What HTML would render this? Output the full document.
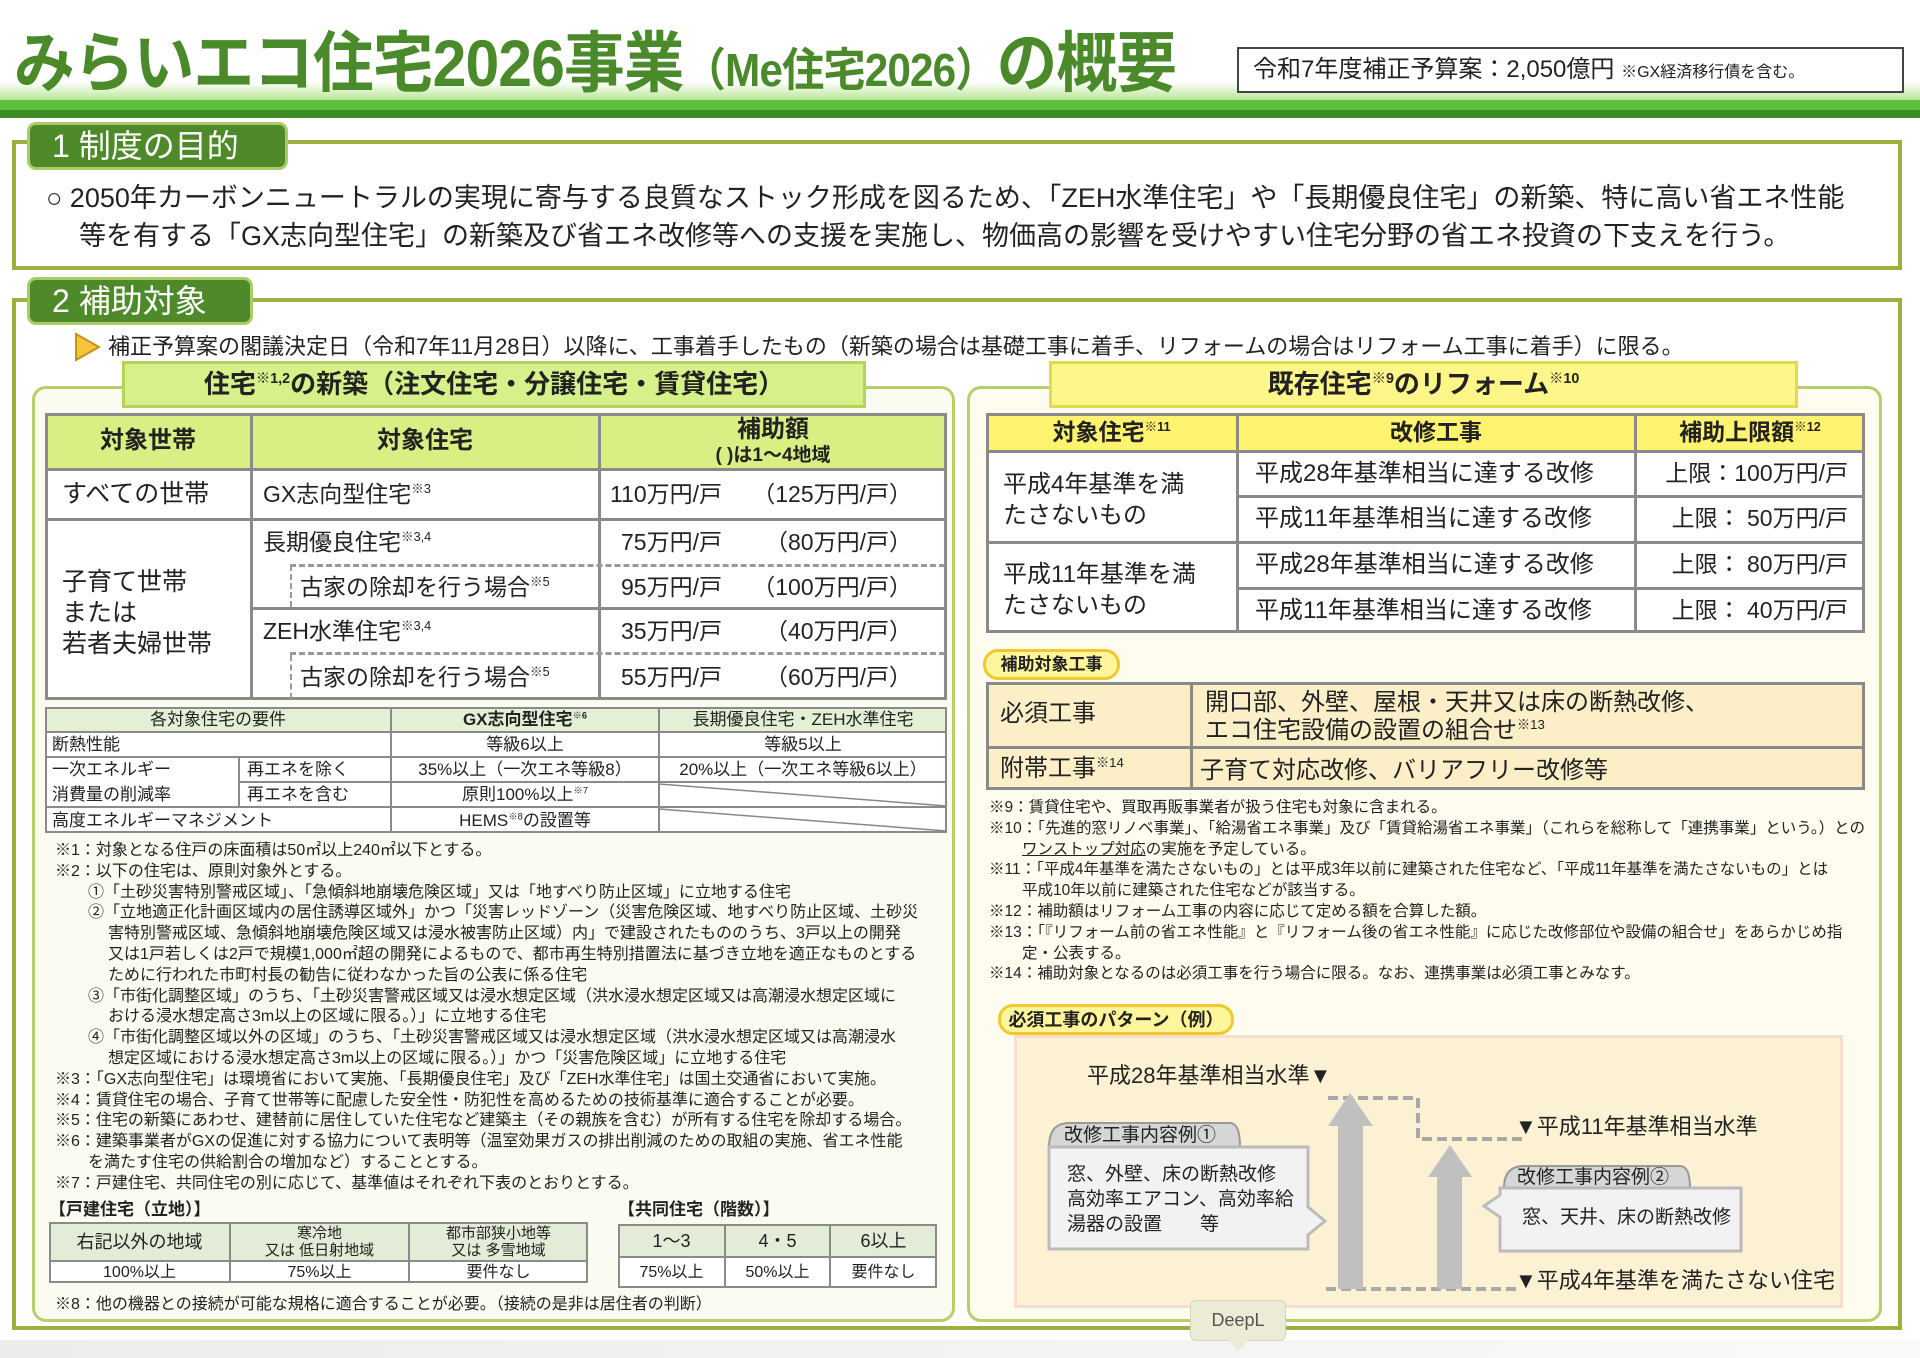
<!DOCTYPE html>
<html><head><meta charset="utf-8">
<style>
*{margin:0;padding:0;box-sizing:border-box}
body{width:1920px;height:1358px;position:relative;background:#fff;font-family:"Liberation Sans","Noto Sans CJK JP",sans-serif;color:#222;overflow:hidden}
.a{position:absolute}
.t{position:absolute;white-space:nowrap;line-height:1}
.c{text-align:center}
sup{font-size:0.55em;vertical-align:0.7em;line-height:0}
.hl{position:absolute;height:3px;background:#8a8a8a}
.vl{position:absolute;width:3px;background:#8a8a8a}
.dh{position:absolute;height:0;border-top:3px dashed #999}
.dv{position:absolute;width:0;border-left:2px dashed #999}
.n{position:absolute;white-space:nowrap;line-height:1;font-size:16px}
.r{position:absolute;white-space:nowrap;line-height:1;font-size:15.5px}
</style></head><body>

<!-- header band -->
<div class="a" style="left:0;top:82px;width:1920px;height:18px;background:linear-gradient(#ffffff,#d6f0c0 60%,#b8e49a)"></div>
<div class="a" style="left:0;top:100px;width:1920px;height:10px;background:#5cc03c"></div>
<div class="a" style="left:0;top:110px;width:1920px;height:8px;background:#3e8e28"></div>

<div class="t" style="left:14px;top:30px;font-size:66px;font-weight:bold;color:#4a8a2a;transform:scaleX(0.92);transform-origin:left;letter-spacing:-1px">みらいエコ住宅2026事業<span style="font-size:46px">（Me住宅2026）</span>の概要</div>

<div class="a" style="left:1237px;top:47px;width:667px;height:46px;border:2px solid #444;background:#fff"></div>
<div class="t" style="left:1253px;top:58px;font-size:24px">令和7年度補正予算案：2,050億円 <span style="font-size:16px">※GX経済移行債を含む。</span></div>

<!-- Section 1 -->
<div class="a" style="left:12px;top:140px;width:1890px;height:130px;border:4px solid #9bb040;background:#fff"></div>
<div class="a" style="left:27px;top:122px;width:261px;height:48px;border:3px solid #a9cc66;border-radius:9px;background:#4e8a2a"></div>
<div class="t" style="left:52px;top:130px;font-size:32px;color:#fff">1 制度の目的</div>
<div class="t" style="left:46px;top:185px;font-size:27px">○ 2050年カーボンニュートラルの実現に寄与する良質なストック形成を図るため、「ZEH水準住宅」や「長期優良住宅」の新築、特に高い省エネ性能</div>
<div class="t" style="left:79px;top:223px;font-size:27px">等を有する「GX志向型住宅」の新築及び省エネ改修等への支援を実施し、物価高の影響を受けやすい住宅分野の省エネ投資の下支えを行う。</div>

<!-- Section 2 -->
<div class="a" style="left:12px;top:298px;width:1890px;height:1032px;border:4px solid #9bb040;background:#fff"></div>
<div class="a" style="left:27px;top:277px;width:226px;height:48px;border:3px solid #a9cc66;border-radius:9px;background:#4e8a2a"></div>
<div class="t" style="left:52px;top:285px;font-size:32px;color:#fff">2 補助対象</div>
<svg class="a" style="left:74px;top:332px" width="28" height="30"><polygon points="2,2 25,15 2,28" fill="#f6c33c" stroke="#c8901e" stroke-width="2"/></svg>
<div class="t" style="left:108px;top:336px;font-size:22px">補正予算案の閣議決定日（令和7年11月28日）以降に、工事着手したもの（新築の場合は基礎工事に着手、リフォームの場合はリフォーム工事に着手）に限る。</div>

<!-- Left panel -->
<div class="a" style="left:32px;top:386px;width:923px;height:936px;border:3px solid #b7cf6a;border-radius:14px;background:#fbfcf1"></div>
<div class="a" style="left:122px;top:361px;width:744px;height:47px;background:#d6f08a;border:3px solid #b3d35a"></div>
<div class="t c" style="left:122px;top:371px;width:744px;font-size:26px;font-weight:bold">住宅<sup>※1,2</sup>の新築（注文住宅・分譲住宅・賃貸住宅）</div>

<!-- main table -->
<div class="a" style="left:45px;top:413px;width:902px;height:287px;background:#fff;border:3px solid #8a8a8a"></div>
<div class="a" style="left:48px;top:416px;width:896px;height:53px;background:#d9ef83"></div>
<div class="vl" style="left:250px;top:413px;height:287px"></div>
<div class="vl" style="left:598px;top:413px;height:287px"></div>
<div class="hl" style="left:45px;top:468px;width:902px"></div>
<div class="hl" style="left:45px;top:518px;width:902px"></div>
<div class="hl" style="left:251px;top:607px;width:696px"></div>
<div class="dh" style="left:290px;top:564px;width:655px"></div>
<div class="dh" style="left:290px;top:652px;width:655px"></div>
<div class="dv" style="left:290px;top:565px;height:42px"></div>
<div class="dv" style="left:290px;top:655px;height:44px"></div>
<div class="t c" style="left:45px;top:429px;width:206px;font-size:24px;font-weight:bold">対象世帯</div>
<div class="t c" style="left:251px;top:429px;width:348px;font-size:24px;font-weight:bold">対象住宅</div>
<div class="t c" style="left:599px;top:418px;width:348px;font-size:24px;font-weight:bold">補助額</div>
<div class="t c" style="left:599px;top:446px;width:348px;font-size:19px;font-weight:bold">( )は1～4地域</div>
<div class="t" style="left:62px;top:482px;font-size:25px">すべての世帯</div>
<div class="t" style="left:62px;top:567px;font-size:25px;line-height:31px">子育て世帯<br>または<br>若者夫婦世帯</div>
<div class="t" style="left:263px;top:483px;font-size:23px">GX志向型住宅<sup>※3</sup></div>
<div class="t" style="left:263px;top:531px;font-size:23px">長期優良住宅<sup>※3,4</sup></div>
<div class="t" style="left:300px;top:576px;font-size:23px">古家の除却を行う場合<sup>※5</sup></div>
<div class="t" style="left:263px;top:620px;font-size:23px">ZEH水準住宅<sup>※3,4</sup></div>
<div class="t" style="left:300px;top:666px;font-size:23px">古家の除却を行う場合<sup>※5</sup></div>
<div class="t" style="right:1198px;top:483px;font-size:23px">110万円/戸</div><div class="t" style="right:1008px;top:483px;font-size:23px">（125万円/戸）</div>
<div class="t" style="right:1198px;top:531px;font-size:23px">75万円/戸</div><div class="t" style="right:1008px;top:531px;font-size:23px">（80万円/戸）</div>
<div class="t" style="right:1198px;top:576px;font-size:23px">95万円/戸</div><div class="t" style="right:1008px;top:576px;font-size:23px">（100万円/戸）</div>
<div class="t" style="right:1198px;top:620px;font-size:23px">35万円/戸</div><div class="t" style="right:1008px;top:620px;font-size:23px">（40万円/戸）</div>
<div class="t" style="right:1198px;top:666px;font-size:23px">55万円/戸</div><div class="t" style="right:1008px;top:666px;font-size:23px">（60万円/戸）</div>

<!-- requirement table -->
<div class="a" style="left:45px;top:707px;width:902px;height:126px;background:#fff;border:2px solid #8a8a8a"></div>
<div class="a" style="left:47px;top:709px;width:898px;height:23px;background:#e4efd6"></div>
<div class="a" style="left:45px;top:731px;width:902px;height:2px;background:#8a8a8a"></div>
<div class="a" style="left:45px;top:756px;width:902px;height:2px;background:#8a8a8a"></div>
<div class="a" style="left:239px;top:781px;width:708px;height:2px;background:#8a8a8a"></div>
<div class="a" style="left:45px;top:806px;width:902px;height:2px;background:#8a8a8a"></div>
<div class="a" style="left:390px;top:707px;width:2px;height:126px;background:#8a8a8a"></div>
<div class="a" style="left:658px;top:707px;width:2px;height:126px;background:#8a8a8a"></div>
<div class="a" style="left:238px;top:757px;width:2px;height:50px;background:#8a8a8a"></div>
<svg class="a" style="left:659px;top:782px" width="288" height="51"><line x1="0" y1="2" x2="288" y2="24" stroke="#888" stroke-width="1.5"/><line x1="0" y1="27" x2="288" y2="49" stroke="#888" stroke-width="1.5"/></svg>
<div class="t c" style="left:45px;top:711px;width:346px;font-size:17px">各対象住宅の要件</div>
<div class="t c" style="left:391px;top:711px;width:268px;font-size:17px;font-weight:bold">GX志向型住宅<sup>※6</sup></div>
<div class="t c" style="left:659px;top:711px;width:288px;font-size:17px">長期優良住宅・ZEH水準住宅</div>
<div class="t" style="left:52px;top:736px;font-size:17px">断熱性能</div>
<div class="t c" style="left:391px;top:736px;width:268px;font-size:17px">等級6以上</div>
<div class="t c" style="left:659px;top:736px;width:288px;font-size:17px">等級5以上</div>
<div class="t" style="left:52px;top:761px;font-size:17px">一次エネルギー</div>
<div class="t" style="left:52px;top:786px;font-size:17px">消費量の削減率</div>
<div class="t" style="left:247px;top:761px;font-size:17px">再エネを除く</div>
<div class="t" style="left:247px;top:786px;font-size:17px">再エネを含む</div>
<div class="t c" style="left:391px;top:761px;width:268px;font-size:17px">35%以上（一次エネ等級8）</div>
<div class="t c" style="left:659px;top:761px;width:288px;font-size:17px">20%以上（一次エネ等級6以上）</div>
<div class="t c" style="left:391px;top:786px;width:268px;font-size:17px">原則100%以上<sup>※7</sup></div>
<div class="t" style="left:52px;top:812px;font-size:17px">高度エネルギーマネジメント</div>
<div class="t c" style="left:391px;top:812px;width:268px;font-size:17px">HEMS<sup>※8</sup>の設置等</div>

<!-- left notes -->
<div class="n" style="left:55px;top:843px">※1：対象となる住戸の床面積は50㎡以上240㎡以下とする。</div>
<div class="n" style="left:55px;top:864px">※2：以下の住宅は、原則対象外とする。</div>
<div class="n" style="left:88px;top:885px">①「土砂災害特別警戒区域」、「急傾斜地崩壊危険区域」又は「地すべり防止区域」に立地する住宅</div>
<div class="n" style="left:88px;top:905px">②「立地適正化計画区域内の居住誘導区域外」かつ「災害レッドゾーン（災害危険区域、地すべり防止区域、土砂災</div>
<div class="n" style="left:108px;top:926px">害特別警戒区域、急傾斜地崩壊危険区域又は浸水被害防止区域）内」で建設されたもののうち、3戸以上の開発</div>
<div class="n" style="left:108px;top:947px">又は1戸若しくは2戸で規模1,000㎡超の開発によるもので、都市再生特別措置法に基づき立地を適正なものとする</div>
<div class="n" style="left:108px;top:968px">ために行われた市町村長の勧告に従わなかった旨の公表に係る住宅</div>
<div class="n" style="left:88px;top:989px">③「市街化調整区域」のうち、「土砂災害警戒区域又は浸水想定区域（洪水浸水想定区域又は高潮浸水想定区域に</div>
<div class="n" style="left:108px;top:1009px">おける浸水想定高さ3m以上の区域に限る。）」に立地する住宅</div>
<div class="n" style="left:88px;top:1030px">④「市街化調整区域以外の区域」のうち、「土砂災害警戒区域又は浸水想定区域（洪水浸水想定区域又は高潮浸水</div>
<div class="n" style="left:108px;top:1051px">想定区域における浸水想定高さ3m以上の区域に限る。）」かつ「災害危険区域」に立地する住宅</div>
<div class="n" style="left:55px;top:1072px">※3：「GX志向型住宅」は環境省において実施、「長期優良住宅」及び「ZEH水準住宅」は国土交通省において実施。</div>
<div class="n" style="left:55px;top:1093px">※4：賃貸住宅の場合、子育て世帯等に配慮した安全性・防犯性を高めるための技術基準に適合することが必要。</div>
<div class="n" style="left:55px;top:1113px">※5：住宅の新築にあわせ、建替前に居住していた住宅など建築主（その親族を含む）が所有する住宅を除却する場合。</div>
<div class="n" style="left:55px;top:1134px">※6：建築事業者がGXの促進に対する協力について表明等（温室効果ガスの排出削減のための取組の実施、省エネ性能</div>
<div class="n" style="left:88px;top:1155px">を満たす住宅の供給割合の増加など）することとする。</div>
<div class="n" style="left:55px;top:1176px">※7：戸建住宅、共同住宅の別に応じて、基準値はそれぞれ下表のとおりとする。</div>

<!-- small tables -->
<div class="t" style="left:49px;top:1201px;font-size:17px;font-weight:bold">【戸建住宅（立地）】</div>
<div class="a" style="left:49px;top:1222px;width:539px;height:61px;background:#fff;border:2px solid #8a8a8a"></div>
<div class="a" style="left:51px;top:1224px;width:535px;height:37px;background:#e3ecd6"></div>
<div class="a" style="left:49px;top:1260px;width:539px;height:2px;background:#8a8a8a"></div>
<div class="a" style="left:229px;top:1222px;width:2px;height:61px;background:#8a8a8a"></div>
<div class="a" style="left:408px;top:1222px;width:2px;height:61px;background:#8a8a8a"></div>
<div class="t c" style="left:49px;top:1233px;width:181px;font-size:18px">右記以外の地域</div>
<div class="t c" style="left:230px;top:1225px;width:179px;font-size:15px;line-height:17px">寒冷地<br>又は 低日射地域</div>
<div class="t c" style="left:409px;top:1225px;width:179px;font-size:15px;line-height:17px">都市部狭小地等<br>又は 多雪地域</div>
<div class="t c" style="left:49px;top:1265px;width:181px;font-size:16px">100%以上</div>
<div class="t c" style="left:230px;top:1265px;width:179px;font-size:16px">75%以上</div>
<div class="t c" style="left:409px;top:1265px;width:179px;font-size:16px">要件なし</div>

<div class="t" style="left:618px;top:1201px;font-size:17px;font-weight:bold">【共同住宅（階数）】</div>
<div class="a" style="left:618px;top:1224px;width:319px;height:64px;background:#fff;border:2px solid #8a8a8a"></div>
<div class="a" style="left:620px;top:1226px;width:315px;height:31px;background:#e3ecd6"></div>
<div class="a" style="left:618px;top:1256px;width:319px;height:2px;background:#8a8a8a"></div>
<div class="a" style="left:724px;top:1224px;width:2px;height:64px;background:#8a8a8a"></div>
<div class="a" style="left:829px;top:1224px;width:2px;height:64px;background:#8a8a8a"></div>
<div class="t c" style="left:618px;top:1232px;width:107px;font-size:18px">1～3</div>
<div class="t c" style="left:725px;top:1232px;width:105px;font-size:18px">4・5</div>
<div class="t c" style="left:830px;top:1232px;width:107px;font-size:18px">6以上</div>
<div class="t c" style="left:618px;top:1265px;width:107px;font-size:16px">75%以上</div>
<div class="t c" style="left:725px;top:1265px;width:105px;font-size:16px">50%以上</div>
<div class="t c" style="left:830px;top:1265px;width:107px;font-size:16px">要件なし</div>
<div class="n" style="left:55px;top:1297px">※8：他の機器との接続が可能な規格に適合することが必要。（接続の是非は居住者の判断）</div>

<!-- Right panel -->
<div class="a" style="left:967px;top:386px;width:915px;height:936px;border:3px solid #b7cf6a;border-radius:14px;background:#fdfcee"></div>
<div class="a" style="left:1049px;top:361px;width:749px;height:47px;background:#fff68a;border:3px solid #dedc4e"></div>
<div class="t c" style="left:1049px;top:371px;width:749px;font-size:26px;font-weight:bold">既存住宅<sup>※9</sup>のリフォーム<sup>※10</sup></div>

<div class="a" style="left:986px;top:413px;width:879px;height:220px;background:#fff;border:3px solid #8a8a8a"></div>
<div class="a" style="left:989px;top:416px;width:873px;height:35px;background:#fff370"></div>
<div class="vl" style="left:1236px;top:413px;height:220px"></div>
<div class="vl" style="left:1634px;top:413px;height:220px"></div>
<div class="hl" style="left:986px;top:450px;width:879px"></div>
<div class="hl" style="left:1237px;top:495px;width:628px"></div>
<div class="hl" style="left:986px;top:541px;width:879px"></div>
<div class="hl" style="left:1237px;top:587px;width:628px"></div>
<div class="t c" style="left:986px;top:421px;width:251px;font-size:23px;font-weight:bold">対象住宅<sup>※11</sup></div>
<div class="t c" style="left:1237px;top:421px;width:398px;font-size:23px;font-weight:bold">改修工事</div>
<div class="t c" style="left:1635px;top:421px;width:230px;font-size:23px;font-weight:bold">補助上限額<sup>※12</sup></div>
<div class="t" style="left:1003px;top:469px;font-size:24px;line-height:31px">平成4年基準を満<br>たさないもの</div>
<div class="t" style="left:1003px;top:559px;font-size:24px;line-height:31px">平成11年基準を満<br>たさないもの</div>
<div class="t" style="left:1255px;top:462px;font-size:24px">平成28年基準相当に達する改修</div>
<div class="t" style="left:1255px;top:507px;font-size:24px">平成11年基準相当に達する改修</div>
<div class="t" style="left:1255px;top:553px;font-size:24px">平成28年基準相当に達する改修</div>
<div class="t" style="left:1255px;top:599px;font-size:24px">平成11年基準相当に達する改修</div>
<div class="t" style="right:72px;top:462px;font-size:23px">上限：100万円/戸</div>
<div class="t" style="right:72px;top:507px;font-size:23px">上限： 50万円/戸</div>
<div class="t" style="right:72px;top:553px;font-size:23px">上限： 80万円/戸</div>
<div class="t" style="right:72px;top:599px;font-size:23px">上限： 40万円/戸</div>

<div class="a" style="left:983px;top:649px;width:137px;height:31px;background:#fff59a;border:3px solid #f0c830;border-radius:15px"></div>
<div class="t c" style="left:983px;top:656px;width:137px;font-size:17px;font-weight:bold">補助対象工事</div>

<div class="a" style="left:986px;top:682px;width:879px;height:108px;background:#fcefc8;border:3px solid #8a8a8a"></div>
<div class="vl" style="left:1190px;top:682px;height:108px"></div>
<div class="hl" style="left:986px;top:746px;width:879px"></div>
<div class="t" style="left:1000px;top:702px;font-size:24px">必須工事</div>
<div class="t" style="left:1205px;top:691px;font-size:24px">開口部、外壁、屋根・天井又は床の断熱改修、</div>
<div class="t" style="left:1205px;top:719px;font-size:24px">エコ住宅設備の設置の組合せ<sup>※13</sup></div>
<div class="t" style="left:1000px;top:757px;font-size:24px">附帯工事<sup>※14</sup></div>
<div class="t" style="left:1200px;top:759px;font-size:24px">子育て対応改修、バリアフリー改修等</div>

<div class="r" style="left:989px;top:800px">※9：賃貸住宅や、買取再販事業者が扱う住宅も対象に含まれる。</div>
<div class="r" style="left:989px;top:821px">※10：「先進的窓リノベ事業」、「給湯省エネ事業」及び「賃貸給湯省エネ事業」（これらを総称して「連携事業」という。）との</div>
<div class="r" style="left:1022px;top:842px"><span style="text-decoration:underline">ワンストップ対応</span>の実施を予定している。</div>
<div class="r" style="left:989px;top:862px">※11：「平成4年基準を満たさないもの」とは平成3年以前に建築された住宅など、「平成11年基準を満たさないもの」とは</div>
<div class="r" style="left:1022px;top:883px">平成10年以前に建築された住宅などが該当する。</div>
<div class="r" style="left:989px;top:904px">※12：補助額はリフォーム工事の内容に応じて定める額を合算した額。</div>
<div class="r" style="left:989px;top:925px">※13：「『リフォーム前の省エネ性能』と『リフォーム後の省エネ性能』に応じた改修部位や設備の組合せ」をあらかじめ指</div>
<div class="r" style="left:1022px;top:946px">定・公表する。</div>
<div class="r" style="left:989px;top:966px">※14：補助対象となるのは必須工事を行う場合に限る。なお、連携事業は必須工事とみなす。</div>

<!-- pattern -->
<div class="a" style="left:1014px;top:1035px;width:829px;height:273px;background:#fdf1d4;border:3px solid #f6ddd0"></div>
<div class="a" style="left:998px;top:1004px;width:236px;height:31px;background:#fff59a;border:3px solid #f0c830;border-radius:15px"></div>
<div class="t c" style="left:998px;top:1011px;width:236px;font-size:18px;font-weight:bold">必須工事のパターン（例）</div>

<svg class="a" style="left:1014px;top:1035px" width="829" height="273">
<g fill="none" stroke="#a8a8a8" stroke-width="4" stroke-dasharray="10,5">
<polyline points="314,63 404,63 404,104 511,104"/>
<line x1="312" y1="254" x2="504" y2="254"/>
</g>
<g fill="#c0c0c0">
<polygon points="324,254 349,254 349,91 359,91 336,58 314,91 324,91"/>
<polygon points="423,254 448,254 448,142 458,142 436,110 414,142 423,142"/>
</g>
<!-- callout1 -->
<path d="M35,112 Q35,88 55,88 L216,88 Q226,88 226,112 Z" fill="#d6d6d6" stroke="#999" stroke-width="2"/>
<path d="M35,112 L294,112 L294,172 L311,186 L294,200 L294,214 L35,214 Z" fill="#f2f2f2" stroke="#bbb" stroke-width="3"/>
<!-- callout2 -->
<path d="M490,153 Q490,131 510,131 L666,131 Q676,131 676,153 Z" fill="#d6d6d6" stroke="#999" stroke-width="2"/>
<path d="M486,153 L727,153 L727,216 L486,216 L486,182 L470,171 L486,160 Z" fill="#f2f2f2" stroke="#bbb" stroke-width="3"/>
</svg>
<div class="t" style="left:1087px;top:1065px;font-size:22px">平成28年基準相当水準▼</div>
<div class="t" style="left:1515px;top:1116px;font-size:22px">▼平成11年基準相当水準</div>
<div class="t" style="left:1515px;top:1270px;font-size:22px">▼平成4年基準を満たさない住宅</div>
<div class="t" style="left:1064px;top:1126px;font-size:19px">改修工事内容例①</div>
<div class="t" style="left:1067px;top:1162px;font-size:19px;line-height:25px">窓、外壁、床の断熱改修<br>高効率エアコン、高効率給<br>湯器の設置　　等</div>
<div class="t" style="left:1517px;top:1168px;font-size:19px">改修工事内容例②</div>
<div class="t" style="left:1522px;top:1208px;font-size:19px">窓、天井、床の断熱改修</div>

<!-- bottom -->
<div class="a" style="left:0;top:1340px;width:1920px;height:18px;background:linear-gradient(90deg,#ececec,#f4f4f4 60%,#fafafa)"></div>
<div class="a" style="left:1190px;top:1300px;width:96px;height:41px;background:#ecebd6;border:1px solid #d6d5c0;border-radius:6px"></div>
<svg class="a" style="left:1228px;top:1340px" width="20" height="14"><polygon points="0,0 20,0 10,12" fill="#ecebd6"/></svg>
<div class="t c" style="left:1190px;top:1311px;width:96px;font-size:18px;color:#555">DeepL</div>
</body></html>
